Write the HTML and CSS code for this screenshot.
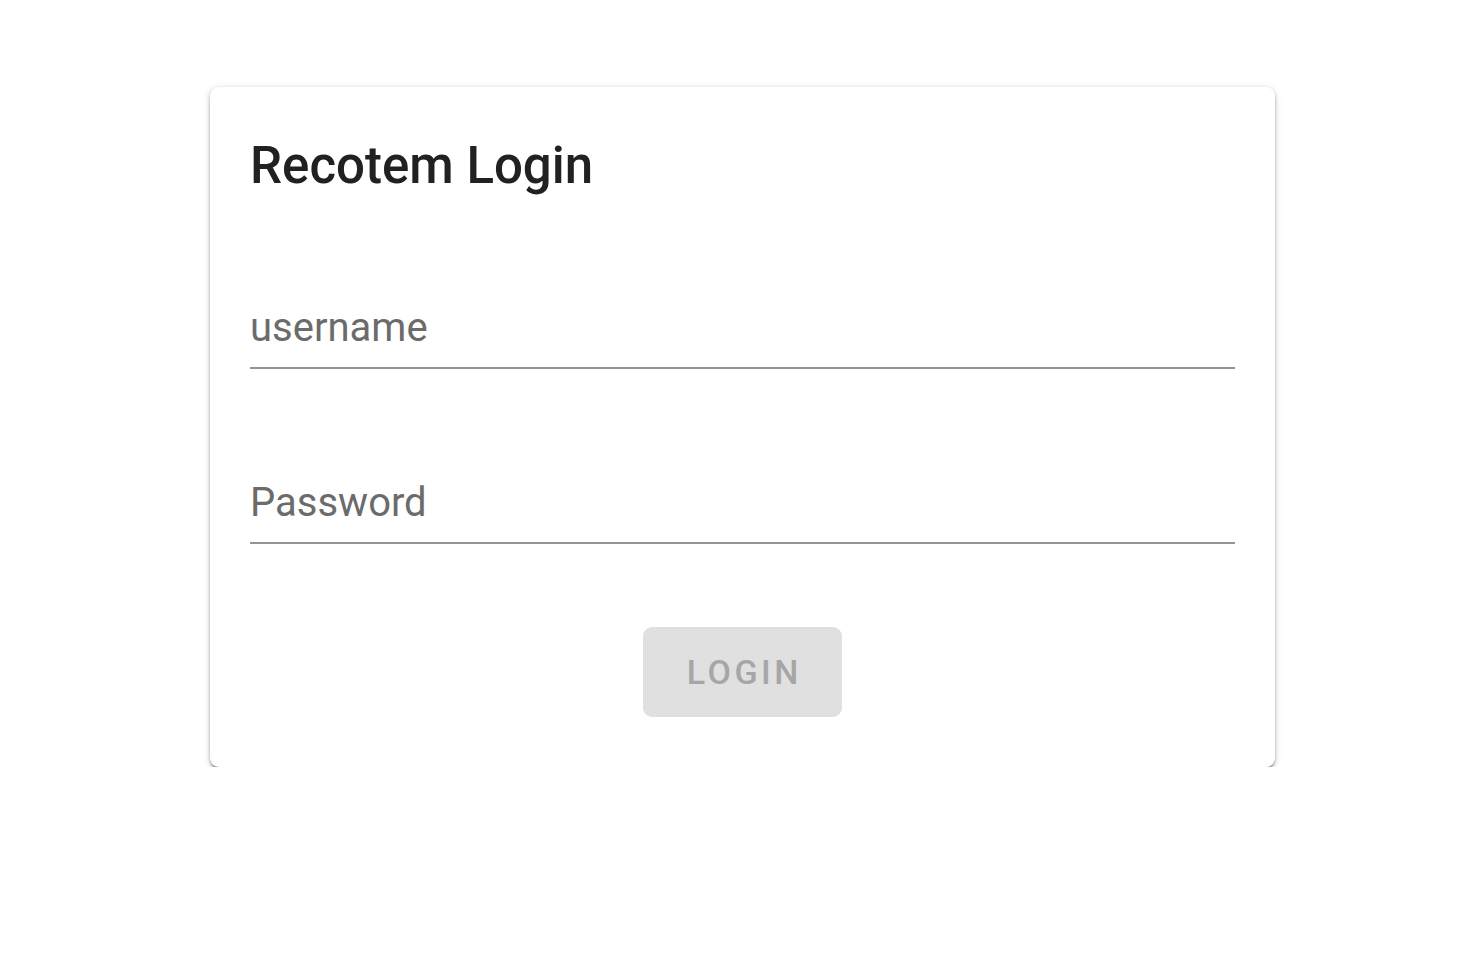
FILE: index.html
```html
<!DOCTYPE html>
<html lang="en">
<head>
<meta charset="utf-8">
<title>Recotem Login</title>
<link rel="stylesheet" href="styles.css">
</head>
<body>
<main class="page">
  <form class="card" onsubmit="return false">
    <h1 class="title">Recotem Login</h1>
    <div class="field">
      <input class="input" type="text" placeholder="username">
    </div>
    <div class="field field-second">
      <input class="input" type="password" placeholder="Password">
    </div>
    <div class="actions">
      <button class="btn" type="submit" disabled>Login</button>
    </div>
  </form>
</main>
</body>
</html>
```

FILE: styles.css
```css
html, body {
  margin: 0;
  padding: 0;
  background: #ffffff;
}

body {
  font-family: Roboto, "Liberation Sans", Arial, sans-serif;
  color: rgba(0, 0, 0, 0.87);
}

.page {
  display: flex;
  padding: 87px 0 0 210px;
}

.card {
  width: 1065px;
  box-sizing: border-box;
  padding: 40px 40px 50px;
  background: #ffffff;
  border-radius: 9px;
  box-shadow: 0 3px 3px -1px rgba(0, 0, 0, 0.32),
              0 2px 4px 0 rgba(0, 0, 0, 0.2),
              0 1px 8px 0 rgba(0, 0, 0, 0.1);
  display: flex;
  flex-direction: column;
}

.title {
  margin: 9px 0 0;
  font-size: 51px;
  font-weight: 500;
  line-height: 60px;
  color: #212121;
  letter-spacing: 0;
}

.field {
  margin-top: 107px;
  display: flex;
}

.field-second {
  margin-top: 109px;
}

.input {
  flex: 1;
  border: none;
  border-bottom: 2px solid #949494;
  border-radius: 0;
  outline: none;
  background: transparent;
  padding: 0 0 16px;
  margin: 0;
  height: 66px;
  box-sizing: border-box;
  font-family: Roboto, "Liberation Sans", Arial, sans-serif;
  font-size: 40px;
  line-height: 48px;
  color: #212121;
}

.input::placeholder {
  color: #6b6b6b;
  opacity: 1;
}

.actions {
  margin-top: 83px;
  display: flex;
  justify-content: center;
}

.btn {
  width: 199px;
  height: 90px;
  border: none;
  border-radius: 9px;
  background: #e0e0e0;
  color: #a6a6a6;
  font-family: Roboto, "Liberation Sans", Arial, sans-serif;
  font-size: 34px;
  font-weight: 500;
  text-transform: uppercase;
  letter-spacing: 3.5px;
  text-indent: 3.5px;
  padding: 0;
  cursor: default;
}
```
